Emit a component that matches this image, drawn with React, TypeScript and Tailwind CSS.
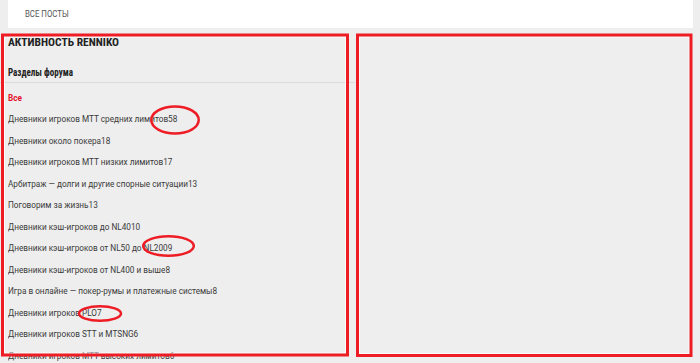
import React from 'react';

const sections = [
    { title: 'Дневники игроков МТТ средних лимитов', count: 58 },
    { title: 'Дневники около покера', count: 18 },
    { title: 'Дневники игроков МТТ низких лимитов', count: 17 },
    { title: 'Арбитраж — долги и другие спорные ситуации', count: 13 },
    { title: 'Поговорим за жизнь', count: 13 },
    { title: 'Дневники кэш-игроков до NL40', count: 10 },
    { title: 'Дневники кэш-игроков от NL50 до NL200', count: 9 },
    { title: 'Дневники кэш-игроков от NL400 и выше', count: 8 },
    { title: 'Игра в онлайне — покер-румы и платежные системы', count: 8 },
    { title: 'Дневники игроков PLO', count: 7 },
    { title: 'Дневники игроков STT и MTSNG', count: 6 },
    { title: 'Дневники игроков МТТ высоких лимитов', count: 6 },
];

const headFont = "font-['Roboto_Condensed','Liberation_Sans_Narrow','DejaVu_Sans_Condensed',Roboto,sans-serif]";

const Annotations: React.FC = () => (
    <svg className="absolute inset-0 pointer-events-none" width="700" height="363" viewBox="0 0 700 363">
        <rect x="4.5" y="37" width="341" height="316" fill="none" stroke="#fafafa" strokeWidth="1" />
        <rect x="359.5" y="37" width="329.5" height="316.5" fill="none" stroke="#fafafa" strokeWidth="1" />
        <rect x="2.5" y="35" width="345" height="320" fill="none" stroke="#ee1c25" strokeWidth="3" />
        <rect x="357.5" y="35" width="333.5" height="320.5" fill="none" stroke="#ee1c25" strokeWidth="3" />
        <ellipse cx="175" cy="120" rx="23.7" ry="13.5" fill="none" stroke="#ee1c25" strokeWidth="2.5" />
        <ellipse cx="168.5" cy="246" rx="25.3" ry="9.8" fill="none" stroke="#ee1c25" strokeWidth="2.5" />
        <ellipse cx="100" cy="313.5" rx="21" ry="7.3" fill="none" stroke="#ee1c25" strokeWidth="2.5" />
    </svg>
);

export default function App() {
    return (
        <div className="relative w-[700px] h-[363px] overflow-hidden bg-[#eeeeee] font-['Roboto',sans-serif]">
            <div className="ml-[8px] mr-[7px] h-[28px] bg-white flex items-center pl-[17px]">
                <span className="text-[8.5px] uppercase text-[#555] scale-x-[0.92] origin-left">Все посты</span>
            </div>

            <div className="flex mt-[6px] gap-[2px]">
                <div className="w-[355px] pl-[8px]">
                    <h3 className={`${headFont} text-[11.5px] font-bold leading-[16px] text-[#222] uppercase`}>
                        Активность renniko
                    </h3>
                    <div className="-ml-[8px] pl-[8px] mt-[15px] pb-[1px] border-b border-[#dcdcdc]">
                        <h4 className={`${headFont} text-[10.5px] font-bold leading-[16px] text-[#222] scale-x-[0.86] origin-left`}>
                            Разделы форума
                        </h4>
                    </div>
                    <ul className="pt-[3.75px] text-[9.5px] leading-[21.5px] text-[#3a3a3a] scale-x-[0.865] origin-left">
                        <li className="font-bold text-[#e4112a]">Все</li>
                        {sections.map((s) => (
                            <li key={s.title} className="whitespace-nowrap">
                                {s.title}{s.count}
                            </li>
                        ))}
                    </ul>
                </div>
                <div className="flex-1 mr-[7px]" />
            </div>

            <Annotations />
        </div>
    );
}
